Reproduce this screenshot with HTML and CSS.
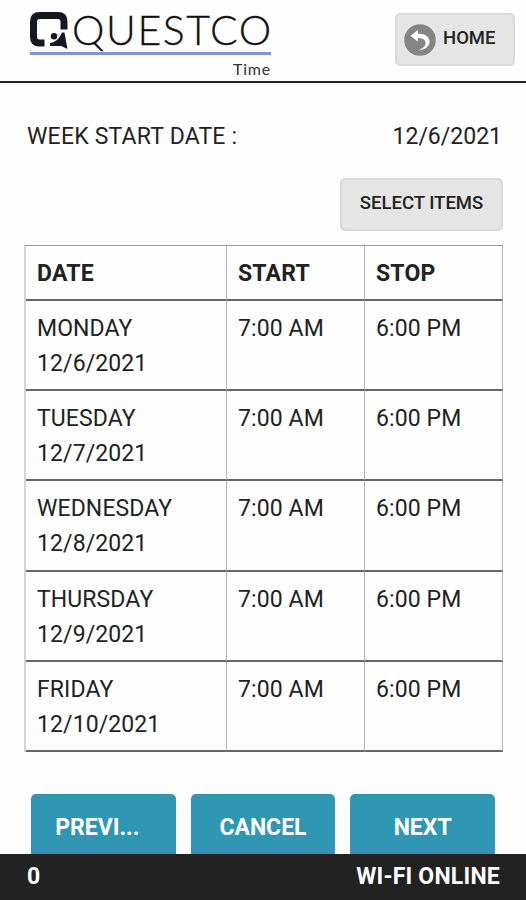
FILE: index.html
```html
<!DOCTYPE html>
<html lang="en">
<head>
    <meta charset="UTF-8">
    <meta name="viewport" content="width=device-width, initial-scale=1.0">
    <title>Questco Time</title>
    <link rel="stylesheet" href="styles.css">
</head>
<body>
    <header class="header">
        <div class="logo">
            <div class="logo-main">
                <svg class="logo-mark" width="40" height="38" viewBox="0 0 40 38">
                    <path d="M14.500 31H9.500Q3.500 31 3.500 25V9.500Q3.500 3.500 9.500 3.500H28Q34 3.500 34 9.500V17.500" fill="none" stroke="#161821" stroke-width="7"/>
                    <circle cx="24" cy="24.200" r="3.200" fill="#161821"/>
                    <path d="M32 20.500L34.500 20.500L37.500 37L31 34H20V31Q28 30 32 20.500Z" fill="#161821"/>
                </svg>
                <span class="logo-name">QUESTCO</span>
            </div>
            <div class="logo-sub">Time</div>
        </div>
        <button class="btn home-btn">
            <svg width="32" height="32" viewBox="0 0 32 32">
                <circle cx="16" cy="16" r="15.800" fill="#858585"/>
                <path d="M6.500 11.800L14 6V9.800C21 9.400 25.800 13 25.500 18C25 23 20.500 26 14.500 26.300C19 24.500 21.600 22 21.500 19C21.200 15.800 19 14.200 14 14V17.800Z" fill="#fff"/>
            </svg>
            <span>HOME</span>
        </button>
    </header>

    <main class="content">
        <div class="week">
            <span class="week-label">WEEK START DATE :</span>
            <span class="week-date">12/6/2021</span>
        </div>
        <div class="tools">
            <button class="btn select-btn">SELECT ITEMS</button>
        </div>
        <table class="time-table">
            <thead>
                <tr><th class="col-date">DATE</th><th class="col-start">START</th><th>STOP</th></tr>
            </thead>
            <tbody>
                <tr><td>MONDAY<br>12/6/2021</td><td>7:00 AM</td><td>6:00 PM</td></tr>
                <tr><td>TUESDAY<br>12/7/2021</td><td>7:00 AM</td><td>6:00 PM</td></tr>
                <tr><td>WEDNESDAY<br>12/8/2021</td><td>7:00 AM</td><td>6:00 PM</td></tr>
                <tr><td>THURSDAY<br>12/9/2021</td><td>7:00 AM</td><td>6:00 PM</td></tr>
                <tr><td>FRIDAY<br>12/10/2021</td><td>7:00 AM</td><td>6:00 PM</td></tr>
            </tbody>
        </table>
        <div class="actions">
            <button class="action-btn prev">PREVI...</button>
            <button class="action-btn">CANCEL</button>
            <button class="action-btn">NEXT</button>
        </div>
    </main>

    <footer class="footer">
        <span>0</span>
        <span class="status">WI-FI ONLINE</span>
    </footer>
</body>
</html>
```

FILE: styles.css
```css
* {
    box-sizing: border-box;
}

body {
    margin: 0;
    height: 900px;
    display: flex;
    flex-direction: column;
    overflow: hidden;
    background-color: #fefefe;
    color: #222;
    font-family: Roboto, "Liberation Sans", sans-serif;
}

button {
    font-family: inherit;
    cursor: pointer;
}

.header {
    display: flex;
    justify-content: space-between;
    align-items: flex-start;
    height: 83px;
    padding: 12px 11px 0 30px;
    border-bottom: 2px solid #222;
}

.logo {
    width: 241px;
}

.logo-main {
    display: flex;
    height: 43px;
    border-bottom: 3px solid #7d93dc;
}

.logo-mark {
    flex: none;
}

.logo-name {
    margin-left: 2px;
    font-family: Lato, sans-serif;
    font-weight: 300;
    font-size: 41px;
    line-height: 36px;
    letter-spacing: 1.6px;
    color: #111;
    -webkit-text-stroke: 0.3px #111;
}

.logo-sub {
    margin-top: 4px;
    font-family: Lato, sans-serif;
    font-size: 16px;
    line-height: 20px;
    letter-spacing: 0.8px;
    text-align: right;
    color: #333;
}

.btn {
    display: flex;
    align-items: center;
    background-color: #e5e5e5;
    border: 2px solid #d9d9d9;
    border-radius: 5px;
    color: #222;
    font-weight: 500;
    font-size: 18.5px;
}

.home-btn {
    width: 120px;
    height: 53px;
    margin-top: 1px;
    padding: 0 0 0 7px;
    gap: 7px;
}

.home-btn span {
    padding-bottom: 3px;
}

.content {
    flex: 1;
    padding: 0 23px 0 24px;
    overflow: hidden;
}

.week {
    display: flex;
    justify-content: space-between;
    padding: 39px 1px 0 3px;
    font-size: 23px;
    line-height: 30px;
}

.week-label {
    letter-spacing: 0.2px;
}

.tools {
    display: flex;
    justify-content: flex-end;
    margin-top: 26px;
}

.select-btn {
    justify-content: center;
    width: 163px;
    height: 53px;
    padding: 0 0 3px;
}

.time-table {
    width: 479px;
    margin-top: 14px;
    border-collapse: separate;
    border-spacing: 0;
    table-layout: fixed;
    border-top: 1px solid #999;
    border-left: 2px solid #d4d4d4;
    font-size: 23px;
    line-height: 35px;
    letter-spacing: 0.1px;
}

.time-table th,
.time-table td {
    padding: 10px 0 0 11px;
    text-align: left;
    vertical-align: top;
    border-right: 1px solid #b5b5b5;
    border-bottom: 2px solid #666;
}

.time-table th {
    height: 55px;
    letter-spacing: 0.2px;
}

.time-table td {
    height: 90.2px;
}

.col-date {
    width: 201px;
}

.col-start {
    width: 138px;
}

.actions {
    display: flex;
    gap: 15px;
    margin-top: 42px;
    padding: 0 8px 0 7px;
}

.action-btn {
    width: calc((100% - 30px) / 3);
    height: 64px;
    padding: 3px 0 0;
    background-color: #2f96b4;
    border: none;
    border-radius: 5px 5px 0 0;
    color: #fff;
    font-weight: 700;
    font-size: 23px;
}

.prev {
    padding-right: 12px;
}

.footer {
    display: flex;
    justify-content: space-between;
    height: 46px;
    padding: 9px 26px 0 27px;
    background-color: #222;
    color: #fff;
    font-weight: 700;
    font-size: 23px;
    line-height: 28px;
}

.status {
    letter-spacing: 0.2px;
}
```
